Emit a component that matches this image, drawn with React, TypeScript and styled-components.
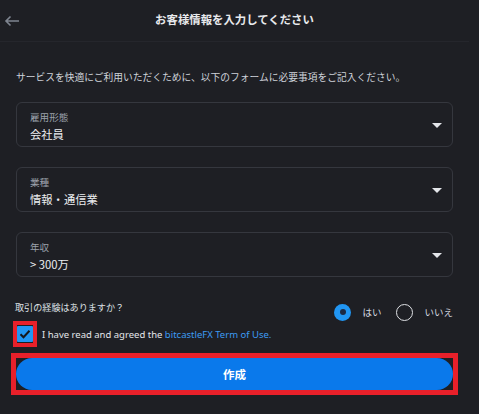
import React from "react";
import styled, { createGlobalStyle } from "styled-components";

const Global = createGlobalStyle`
  html, body { margin: 0; padding: 0; background: #1e1f24; }
  body { font-family: "Noto Sans CJK JP", "Noto Sans", sans-serif; color: #e6e7ea; }
  * { box-sizing: border-box; }
`;

const Page = styled.div`
  width: 479px;
  height: 414px;
  background: #1e1f24;
  overflow: hidden;
`;

const Header = styled.header`
  position: relative;
  height: 42px;
  width: 469px;
  display: flex;
  align-items: center;
  justify-content: center;
  border-bottom: 1px solid #25262c;
`;

const BackButton = styled.button`
  position: absolute;
  left: 4px;
  top: 13px;
  width: 16px;
  height: 16px;
  padding: 0;
  border: none;
  background: transparent;
  display: flex;
  align-items: center;
  justify-content: center;
`;

const Title = styled.h1`
  margin: 0;
  font-size: 11.4px;
  font-weight: 700;
  color: #e8e9ec;
  line-height: 16px;
  margin-top: -3px;
`;

const Body = styled.main`
  width: 469px;
  padding: 27px 16px 0 16px;
  display: flex;
  flex-direction: column;
`;

const Description = styled.p`
  margin: 0;
  font-size: 9.75px;
  line-height: 16px;
  color: #cfd3da;
  white-space: nowrap;
`;

const Fields = styled.div`
  margin-top: 17px;
  display: flex;
  flex-direction: column;
  gap: 20px;
`;

const SelectBox = styled.div`
  height: 45px;
  border: 1px solid #35373e;
  border-radius: 6px;
  padding: 0 10px 0 13px;
  display: flex;
  align-items: center;
`;

const SelectTexts = styled.div`
  flex: 1;
  display: flex;
  flex-direction: column;
  gap: 2px;
  padding-top: 4px;
`;

const SelectLabel = styled.span`
  font-size: 9.6px;
  line-height: 13px;
  color: #9ba1ab;
`;

const SelectValue = styled.span`
  font-size: 11.3px;
  line-height: 16px;
  color: #eceef1;
`;

const Caret = styled.span`
  width: 0;
  height: 0;
  border-left: 5px solid transparent;
  border-right: 5px solid transparent;
  border-top: 5px solid #e4e6ea;
  margin-top: 1px;
`;

const QuestionRow = styled.div`
  margin-top: 25px;
  display: flex;
  align-items: center;
  justify-content: space-between;
  height: 16px;
`;

const Question = styled.span`
  font-size: 9.1px;
  color: #dfe2e6;
  margin-left: -1px;
  margin-top: -6px;
`;

const RadioGroup = styled.div`
  display: flex;
  align-items: center;
  margin-top: 4px;
`;

const RadioItem = styled.label`
  display: flex;
  align-items: center;
  gap: 11px;
  margin-left: 15px;
  &:first-child { margin-left: 0; }
`;

const RadioCircle = styled.span<{ $checked?: boolean }>`
  width: 17px;
  height: 17px;
  border-radius: 50%;
  display: flex;
  align-items: center;
  justify-content: center;
  ${(p) =>
    p.$checked
      ? `background: #2196f3;`
      : `border: 1.6px solid #dfe1e5;`}
`;

const RadioDot = styled.span`
  width: 6px;
  height: 6px;
  border-radius: 50%;
  background: #1b2a44;
`;

const RadioText = styled.span`
  font-size: 9.5px;
  color: #d9dce1;
`;

const CheckRow = styled.div`
  margin-top: 3px;
  margin-left: -3px;
  display: flex;
  align-items: center;
  gap: 5px;
`;

const Highlight = styled.div`
  border: 4px solid #e8202a;
`;

const CheckOutline = styled(Highlight)`
  width: 24px;
  height: 26px;
  display: flex;
  align-items: center;
  justify-content: center;
`;

const CheckBox = styled.span`
  width: 16px;
  height: 16px;
  background: #2196f3;
  border-radius: 1px;
  display: flex;
  align-items: center;
  justify-content: center;
`;

const AgreeText = styled.span`
  font-family: "Noto Sans", "Noto Sans CJK JP", sans-serif;
  font-size: 9.5px;
  color: #e4e6ea;
`;

const Link = styled.a`
  color: #3d9bf2;
  text-decoration: none;
`;

const ButtonOutline = styled(Highlight)`
  margin: 6px -5px 0 -5px;
  border-width: 5px;
  height: 42px;
  background: #1e1f24;
`;

const SubmitButton = styled.button`
  width: 100%;
  height: 32px;
  border: none;
  border-radius: 16px;
  background: #0a79eb;
  color: #ffffff;
  font-family: "Noto Sans CJK JP", sans-serif;
  font-size: 11.5px;
  font-weight: 700;
  display: flex;
  align-items: center;
  justify-content: center;
  padding: 0;
`;

const fields = [
  { label: "雇用形態", value: "会社員" },
  { label: "業種", value: "情報・通信業" },
  { label: "年収", value: "> 300万" },
];

export default function App() {
  return (
    <Page>
      <Global />
      <Header>
        <BackButton aria-label="back">
          <svg width="16" height="12" viewBox="0 0 16 12" fill="none">
            <path d="M15 6H2M6.5 1.5L2 6l4.5 4.5" stroke="#7f8590" strokeWidth="1.6" />
          </svg>
        </BackButton>
        <Title>お客様情報を入力してください</Title>
      </Header>
      <Body>
        <Description>
          サービスを快適にご利用いただくために、以下のフォームに必要事項をご記入ください。
        </Description>
        <Fields>
          {fields.map((f) => (
            <SelectBox key={f.label}>
              <SelectTexts>
                <SelectLabel>{f.label}</SelectLabel>
                <SelectValue>{f.value}</SelectValue>
              </SelectTexts>
              <Caret />
            </SelectBox>
          ))}
        </Fields>
        <QuestionRow>
          <Question>取引の経験はありますか？</Question>
          <RadioGroup>
            <RadioItem>
              <RadioCircle $checked>
                <RadioDot />
              </RadioCircle>
              <RadioText>はい</RadioText>
            </RadioItem>
            <RadioItem>
              <RadioCircle />
              <RadioText>いいえ</RadioText>
            </RadioItem>
          </RadioGroup>
        </QuestionRow>
        <CheckRow>
          <CheckOutline>
            <CheckBox>
              <svg width="12" height="10" viewBox="0 0 12 10" fill="none">
                <path d="M1.5 5.2L4.5 8.2L10.5 1.8" stroke="#15171c" strokeWidth="2" />
              </svg>
            </CheckBox>
          </CheckOutline>
          <AgreeText>
            I have read and agreed the <Link href="#">bitcastleFX Term of Use.</Link>
          </AgreeText>
        </CheckRow>
        <ButtonOutline>
          <SubmitButton>作成</SubmitButton>
        </ButtonOutline>
      </Body>
    </Page>
  );
}
